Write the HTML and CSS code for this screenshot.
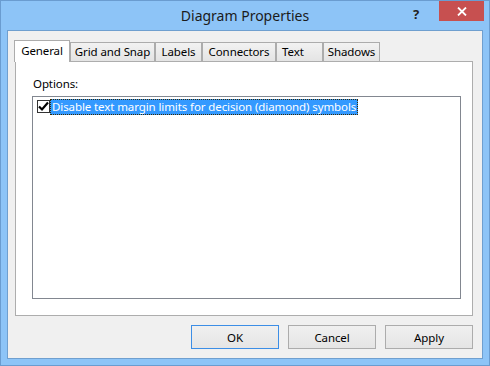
FILE: index.html
```html
<!DOCTYPE html>
<html lang="en">
<head>
  <meta charset="UTF-8">
  <title>Diagram Properties</title>
  <link rel="stylesheet" href="styles.css">
</head>
<body>
  <div class="window">
    <div class="titlebar">
      <div></div>
      <div class="title">Diagram Properties</div>
      <div class="controls">
        <span class="help">?</span>
        <span class="close">
          <svg width="10" height="9" viewBox="0 0 10 9">
            <path d="M1 0.5 L9 8.5 M9 0.5 L1 8.5" stroke="#fff" stroke-width="1.8" fill="none"/>
          </svg>
        </span>
      </div>
    </div>

    <div class="client">
      <div class="tabs">
        <div class="tab active">General</div>
        <div class="tab w-grid">Grid and Snap</div>
        <div class="tab w-labels">Labels</div>
        <div class="tab w-conn">Connectors</div>
        <div class="tab w-text">Text</div>
        <div class="tab w-shadows">Shadows</div>
      </div>

      <div class="panel">
        <div class="options-label">Options:</div>
        <div class="listbox">
          <div class="item">
            <span class="check">
              <svg width="13" height="13" viewBox="0 0 13 13">
                <path d="M2 6.5 L5 9.5 L11 2.5" stroke="#000" stroke-width="2.2" fill="none"/>
              </svg>
            </span>
            <span class="item-text">Disable text margin limits for decision (diamond) symbols</span>
          </div>
        </div>
      </div>

      <div class="buttons">
        <button class="btn default">OK</button>
        <button class="btn">Cancel</button>
        <button class="btn">Apply</button>
      </div>
    </div>
  </div>
</body>
</html>
```

FILE: styles.css
```css
* {
  margin: 0;
  padding: 0;
  box-sizing: border-box;
}

body {
  font-family: 'Noto Sans', 'Open Sans', sans-serif;
  font-size: 11.5px;
  letter-spacing: -0.1px;
  color: #000;
  background: #fff;
}

.window {
  width: 490px;
  height: 366px;
  background: #8dc4f7;
  border: 1px solid #6a9cd0;
  padding: 0 6px 6px;
  display: flex;
  flex-direction: column;
}

.titlebar {
  height: 29px;
  display: grid;
  grid-template-columns: 1fr auto 1fr;
  align-items: start;
}

.title {
  font-size: 14px;
  letter-spacing: 0;
  color: #1b1b1b;
  padding-top: 5px;
}

.controls {
  display: flex;
  justify-content: flex-end;
  margin-right: -1px;
}

.help {
  width: 26px;
  padding-top: 4px;
  font-weight: bold;
  font-size: 13px;
  color: #222;
  text-align: left;
}

.close {
  width: 45px;
  height: 20px;
  background: #c75050;
  display: flex;
  align-items: center;
  justify-content: center;
}

.client {
  flex: 1;
  background: #f0f0f0;
  border: 1px solid #6f9fcf;
  display: flex;
  flex-direction: column;
}

.tabs {
  display: flex;
  align-items: flex-end;
  margin-top: 8px;
  padding-left: 6px;
  height: 22px;
  position: relative;
  z-index: 1;
}

.tab {
  height: 19px;
  border: 1px solid #acacac;
  border-bottom: none;
  background: linear-gradient(#f2f2f2, #e4e4e4);
  text-align: center;
  line-height: 17px;
}

.tab.active {
  width: 56px;
  height: 22px;
  background: #fff;
  margin-bottom: -1px;
  line-height: 20px;
  padding-bottom: 2px;
}

.w-grid { width: 85px; }
.w-labels { width: 47px; }
.w-conn { width: 74px; }
.w-text { width: 47px; text-align: left; padding-left: 5px; }
.w-shadows { width: 57px; }

.panel {
  margin: 0 9px 0 7px;
  height: 255px;
  background: #fff;
  border: 1px solid #adadad;
  padding: 14px 11px 0 16px;
}

.options-label {
  padding-left: 1px;
  height: 20px;
}

.listbox {
  height: 203px;
  border: 1px solid #828790;
  padding: 1px 4px;
}

.item {
  display: flex;
  align-items: center;
  height: 17px;
}

.check {
  width: 13px;
  height: 13px;
  border: 1px solid #333;
  background: #fff;
  display: flex;
  align-items: center;
  justify-content: center;
}

.check svg {
  margin: -1px;
}

.item-text {
  background: #3399ff;
  color: #fff;
  border: 1px dotted #3a2a00;
  padding: 0 1px;
  line-height: 14px;
}

.buttons {
  display: flex;
  justify-content: flex-end;
  gap: 9px;
  margin-top: 9px;
  padding-right: 9px;
}

.btn {
  width: 88px;
  height: 24px;
  font-family: inherit;
  font-size: 11.5px;
  letter-spacing: -0.1px;
  color: #000;
  border: 1px solid #acacac;
  background: linear-gradient(#f0f0f0, #e5e5e5);
}

.btn.default {
  border-color: #3c8ee6;
}
```
